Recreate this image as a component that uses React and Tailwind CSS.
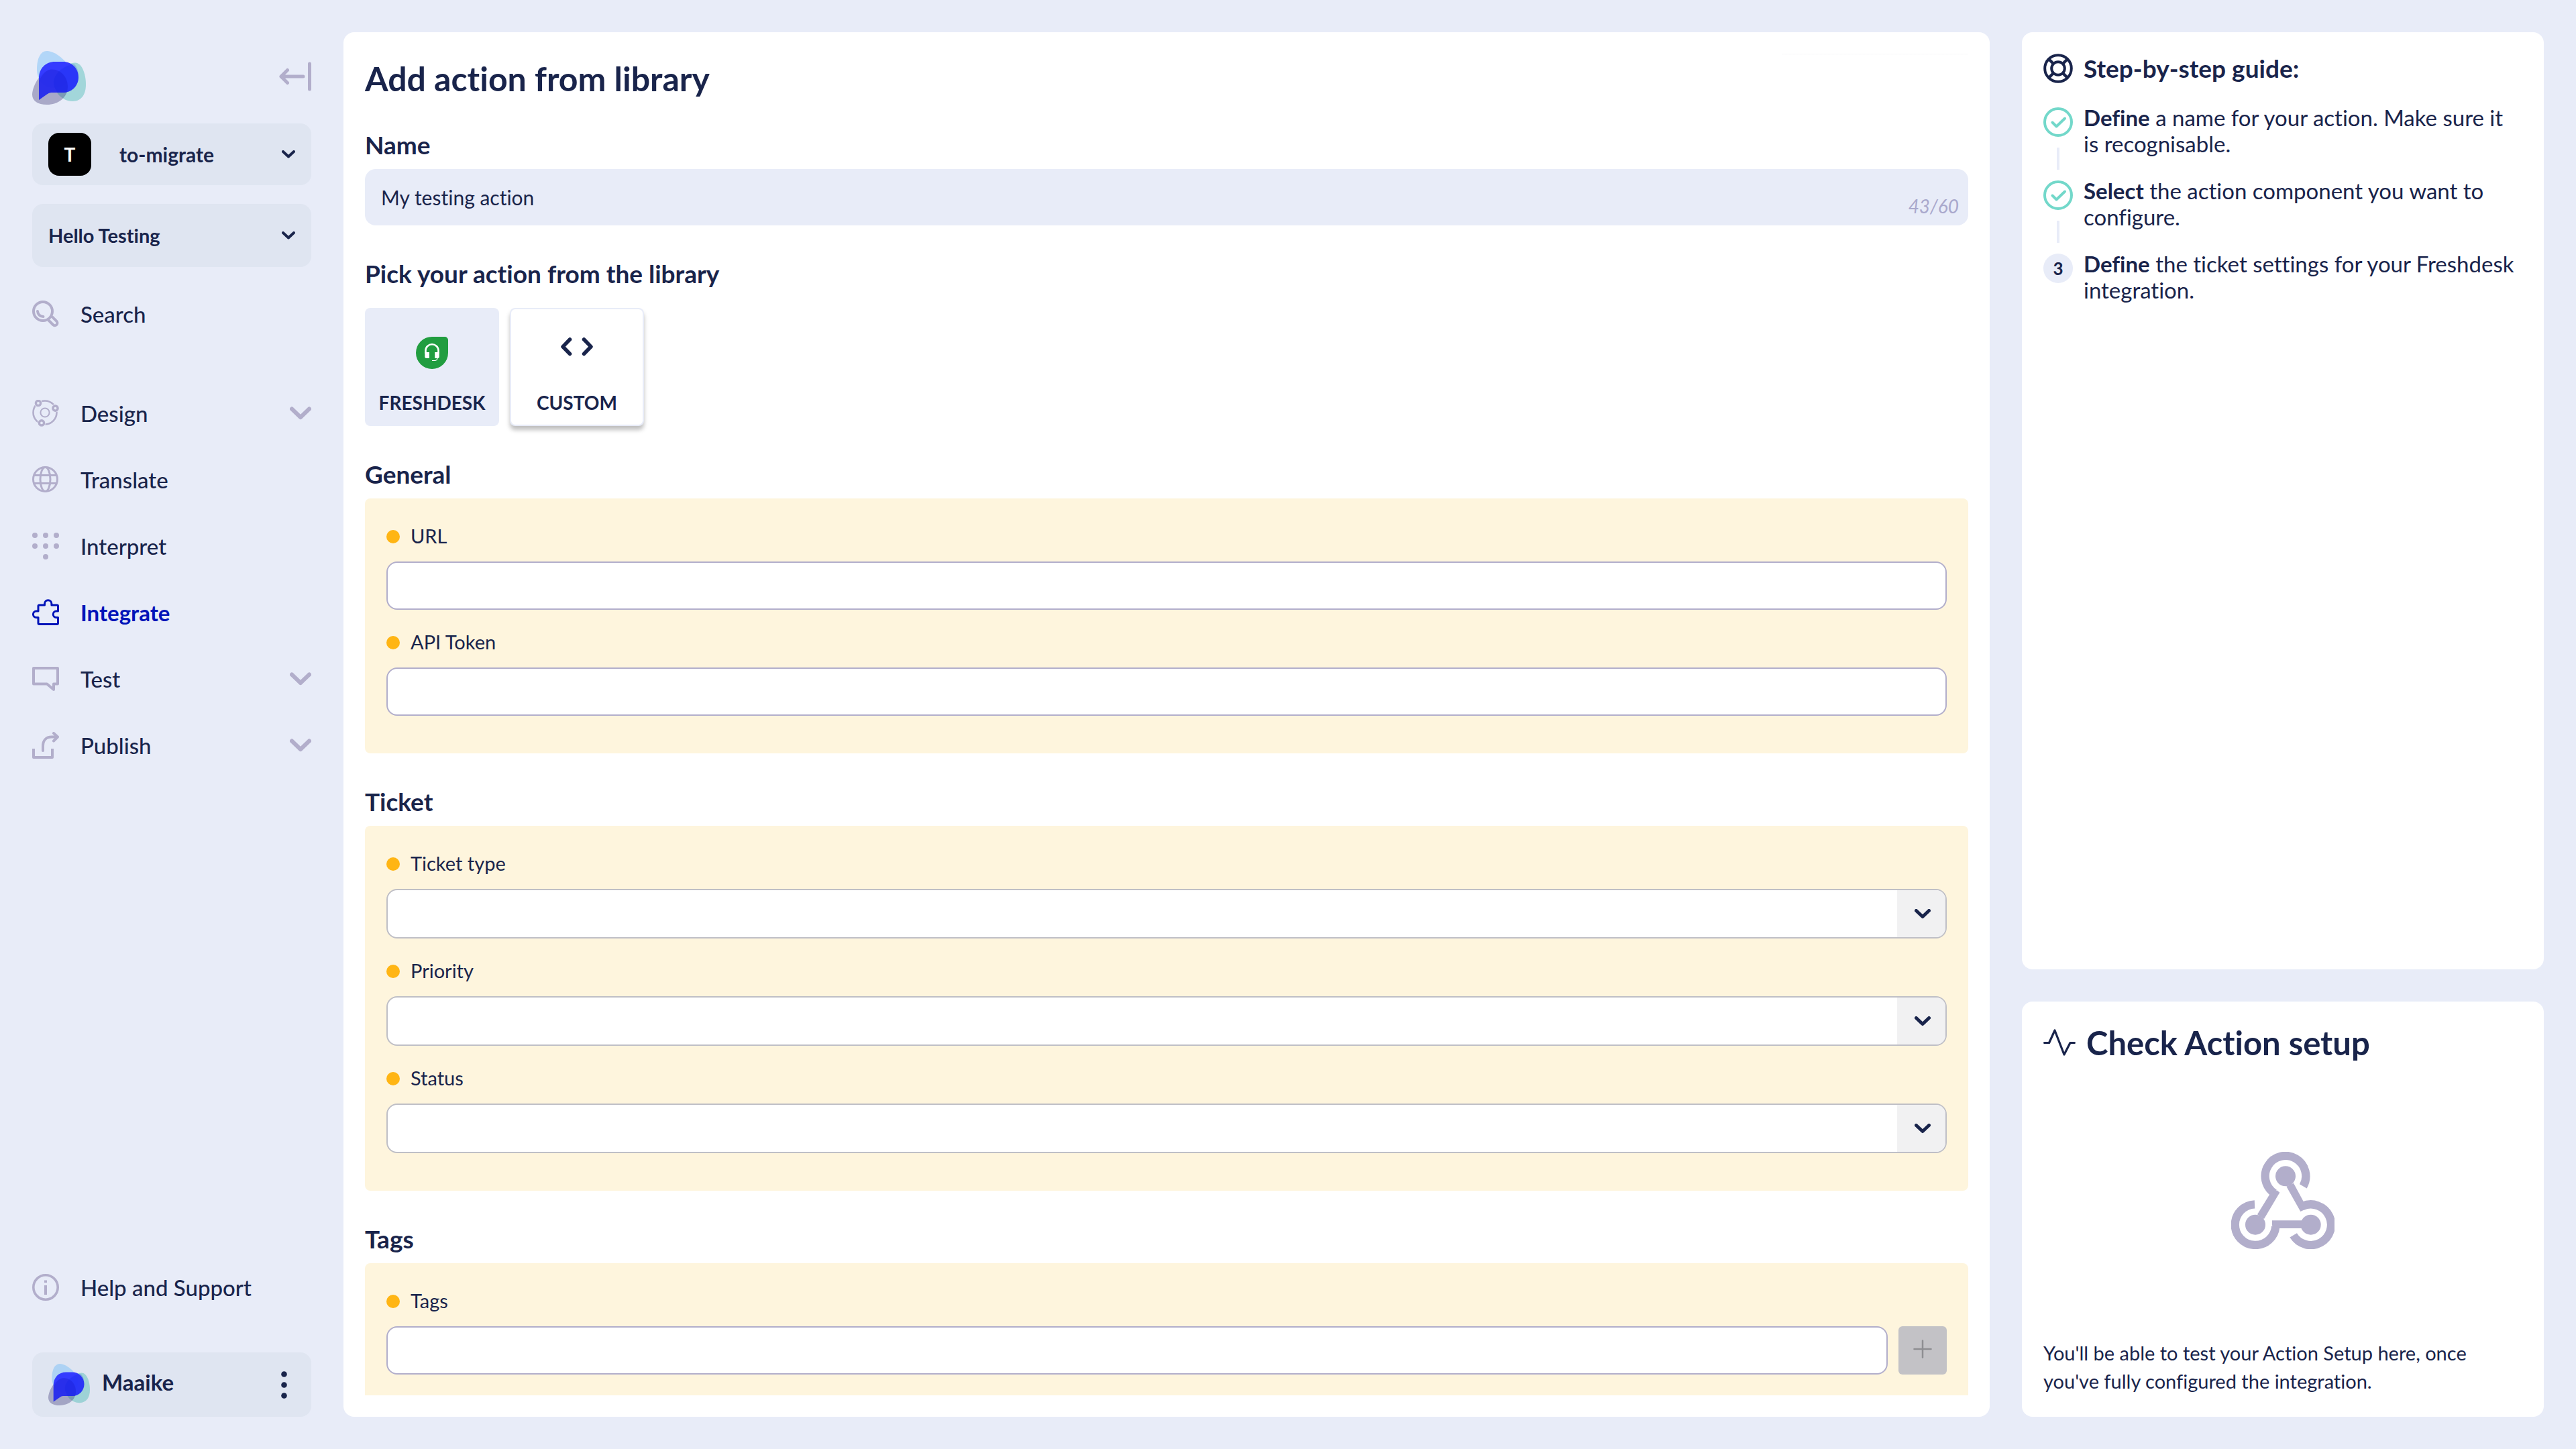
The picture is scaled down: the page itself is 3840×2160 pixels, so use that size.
import React from "react";

const LILAC = "#B2AECB";
const NAVY = "#19244B";

function Logo({ className }) {
  return (
    <svg viewBox="0 0 80 80" className={className} aria-hidden="true">
      <path d="M22 0C36 0 58 20 58 34C58 48 44 55 32 55C14 55 7 40 7 27C7 12 12 0 22 0Z" fill="#7CC0F8" fillOpacity="0.5" />
      <path d="M64 17.5C74 17.5 80 34 80 50C80 64 74 75 60 75C44 75 32 60 32 47C32 32 50 17.5 64 17.5Z" fill="#5CC0BC" fillOpacity="0.5" />
      <path d="M29 27.5C44 27.5 53 40 53 53C53 70 38 80 22 80C8 80 0 74 0 65C0 52 14 27.5 29 27.5Z" fill="#332D6F" fillOpacity="0.35" />
      <path d="M10 73V41C10 26 20 16 34 16H46C59 16 69 26 69 39C69 52 59 62 46 62H28Q25 62 22 64.500Z" fill="#2A2FFF" fillOpacity="0.93" />
      <path d="M29 27.500C44 27.500 53 40 53 53Q53 58 51.500 61.500Q49 62 46 62H28Q25 62 22 64.500L10 73V45C15 34 22 27.500 29 27.500Z" fill="#1A1EC8" fillOpacity="0.3" />
      <path d="M64 21C68 26 69 32 69 39C69 52 59 62 46 62H38C34 57 32 51 32 47C32 35 46 22 62 19.500Z" fill="#0A22E8" fillOpacity="0.2" />
    </svg>
  );
}

function CollapseIcon() {
  return (
    <svg viewBox="0 0 48 44" className="mb-1 h-11 w-12" fill="none" stroke={LILAC} strokeWidth="5" strokeLinecap="round" strokeLinejoin="round" aria-hidden="true">
      <path d="M45.500 3V41M36 22H3M12.500 12.500L3 22L12.500 31.500" />
    </svg>
  );
}

function SmallChevron() {
  return (
    <svg viewBox="0 0 20 12" className="h-3 w-5 shrink-0" fill="none" stroke={NAVY} strokeWidth="4" strokeLinecap="round" strokeLinejoin="round" aria-hidden="true">
      <path d="M2 2L10 9.500L18 2" />
    </svg>
  );
}

function NavChevron() {
  return (
    <svg viewBox="0 0 32 20" className="ml-auto h-5 w-8" fill="none" stroke={LILAC} strokeWidth="6" strokeLinecap="round" strokeLinejoin="round" aria-hidden="true">
      <path d="M3 3.500L16 16L29 3.500" />
    </svg>
  );
}

function NavSvg({ children, color = LILAC, width = 4 }) {
  return (
    <svg viewBox="0 0 40 40" className="size-10 shrink-0" fill="none" stroke={color} strokeWidth={width} strokeLinejoin="round" aria-hidden="true">
      {children}
    </svg>
  );
}

const icons = {
  search: (
    <NavSvg>
      <circle cx="16" cy="16" r="14" />
      <path d="M8 16A8.500 8.500 0 0 0 16.500 24" strokeLinecap="round" />
      <path d="M24 29l7 7a3.700 3.700 0 0 0 5.400-5.200l-7-7" />
    </NavSvg>
  ),
  design: (
    <NavSvg width={2.6}>
      <circle cx="19" cy="19" r="17.500" />
      <circle cx="19" cy="19" r="6.600" strokeWidth="2" />
      {[[9, 5], [34.5, 12.6], [14, 34.4]].map(([x, y]) => (
        <g key={x}>
          <circle cx={x} cy={y} r="6" fill="#E8ECF8" stroke="none" />
          <circle cx={x} cy={y} r="3.600" strokeWidth="3.400" />
        </g>
      ))}
    </NavSvg>
  ),
  translate: (
    <NavSvg width={3}>
      <circle cx="19.500" cy="19.500" r="18" />
      <ellipse cx="19.500" cy="19.500" rx="7.500" ry="18" />
      <path d="M2.500 13.500H36.500M2.500 25.500H36.500" />
    </NavSvg>
  ),
  interpret: (
    <NavSvg>
      {[[4, 4], [20, 4], [36, 4], [4, 20], [20, 20], [36, 20], [20, 36]].map(([x, y]) => (
        <circle key={`${x}-${y}`} cx={x} cy={y} r="4" fill={LILAC} stroke="none" />
      ))}
    </NavSvg>
  ),
  integrate: (
    <NavSvg color="#0013B8" width={3}>
      <path d="M9 18V10.500Q9 9 10.500 9H18.500V7a5.200 5.200 0 0 1 10.400 0V9H37Q38.500 9 38.500 10.500V18H36a4.750 4.750 0 0 0 0 9.500h2.500V36Q38.500 37.500 37 37.500H10.500Q9 37.500 9 36V27.500H6.200a4.750 4.750 0 0 1 0-9.500Z" />
    </NavSvg>
  ),
  test: (
    <NavSvg>
      <path d="M2 4H38V27.500H32V36L22 27.500H2Z" />
    </NavSvg>
  ),
  publish: (
    <NavSvg>
      <path d="M2 25V38H30V25" />
      <path d="M16 28V21C16 12.500 21 7.500 29 7.500H37M32 2L38 7.500L32 13.500" strokeLinecap="round" />
    </NavSvg>
  ),
  help: (
    <NavSvg width={3.6}>
      <circle cx="20" cy="20" r="18.200" />
      <path d="M18 9.500h4v3.500h-4zM18 17h4v14h-4z" fill={LILAC} stroke="none" />
    </NavSvg>
  ),
};

function NavItem({ icon, label, active, expandable }) {
  return (
    <a href="#" aria-current={active ? "page" : undefined} className={`flex h-[99px] items-center gap-8 text-[33px] leading-10 ${active ? "font-bold text-[#0013B8]" : "font-medium"}`}>
      {icons[icon]}
      <span>{label}</span>
      {expandable && <NavChevron />}
    </a>
  );
}

function Sidebar() {
  return (
    <aside className="flex w-[512px] shrink-0 flex-col px-12 pt-7">
      <div className="flex items-center justify-between">
        <Logo className="size-20" />
        <button type="button" aria-label="Collapse menu"><CollapseIcon /></button>
      </div>
      <button type="button" className="mt-7 flex h-[92px] items-center rounded-2xl bg-[#DFE5F1] px-6 text-[30px] font-bold">
        <span className="flex size-16 items-center justify-center rounded-2xl bg-black text-[28px] text-white">T</span>
        <span className="ml-[42px] mr-auto">to-migrate</span>
        <SmallChevron />
      </button>
      <button type="button" className="mt-7 flex h-[94px] items-center justify-between rounded-2xl bg-[#DFE5F1] px-6 text-[29px] font-bold">
        <span>Hello Testing</span>
        <SmallChevron />
      </button>
      <nav className="mt-5 flex flex-col">
        <NavItem icon="search" label="Search" />
        <div className="mt-[49px] flex flex-col">
          <NavItem icon="design" label="Design" expandable />
          <NavItem icon="translate" label="Translate" />
          <NavItem icon="interpret" label="Interpret" />
          <NavItem icon="integrate" label="Integrate" active />
          <NavItem icon="test" label="Test" expandable />
          <NavItem icon="publish" label="Publish" expandable />
        </div>
      </nav>
      <div className="mt-auto">
        <NavItem icon="help" label="Help and Support" />
      </div>
      <div className="mt-12 flex h-24 shrink-0 items-center rounded-2xl bg-[#DFE5F1] px-6">
        <Logo className="size-[62px]" />
        <span className="ml-[18px] pb-2 text-[33px] leading-10 font-bold">Maaike</span>
        <button type="button" aria-label="Account menu" className="ml-auto mr-3">
          <svg viewBox="0 0 9 41" className="h-[41px] w-[9px]" fill={NAVY} aria-hidden="true">
            <circle cx="4.500" cy="4.500" r="4.300" />
            <circle cx="4.500" cy="20.500" r="4.300" />
            <circle cx="4.500" cy="36.500" r="4.300" />
          </svg>
        </button>
      </div>
    </aside>
  );
}

function FreshdeskIcon() {
  return (
    <svg viewBox="0 0 48 48" className="size-12" fill="none" aria-hidden="true">
      <path d="M24 0H43A5 5 0 0 1 48 5V24A24 24 0 1 1 24 0Z" fill="#219D40" />
      <path d="M14.500 25V20.500A9.500 9.200 0 0 1 33.500 20.500V25" stroke="#fff" strokeWidth="2.600" />
      <path d="M13.300 23H20V32H15.300Q13.300 32 13.300 30ZM28.200 23H34.800V30Q34.800 32 32.800 32H28.200Z" fill="#fff" />
      <path d="M32 32Q31.500 35.500 28 35.500H24" stroke="#fff" strokeWidth="1.200" />
    </svg>
  );
}

function CodeIcon() {
  return (
    <svg viewBox="0 0 48 48" className="size-12" fill="none" stroke={NAVY} strokeWidth="5.500" strokeLinecap="round" strokeLinejoin="round" aria-hidden="true">
      <path d="M13.500 4L3 14.800L13.500 25.500M34.500 4L45 14.800L34.500 25.500" />
    </svg>
  );
}

function Heading({ children, htmlFor }) {
  const cls = "block pt-1 text-[37px] leading-[46px] font-bold";
  return htmlFor ? <label htmlFor={htmlFor} className={cls}>{children}</label> : <h2 className={cls}>{children}</h2>;
}

function FieldLabel({ id, children }) {
  return (
    <label htmlFor={id} className="flex h-[34px] items-center gap-4 text-[29px] leading-[32px]">
      <span className="size-5 rounded-full bg-[#FFB514]" />
      <span className="pb-0.5">{children}</span>
    </label>
  );
}

function TextField({ id, label, button }) {
  return (
    <div className="flex flex-col gap-5">
      <FieldLabel id={id}>{label}</FieldLabel>
      <div className="flex gap-4">
        <input id={id} type="text" className="h-[72px] min-w-0 flex-1 rounded-2xl border-2 border-[#B2AECB] bg-white px-6 text-[29px] outline-none" />
        {button}
      </div>
    </div>
  );
}

function SelectField({ id, label }) {
  return (
    <div className="flex flex-col gap-5">
      <FieldLabel id={id}>{label}</FieldLabel>
      <div className="relative flex h-[74px] overflow-hidden rounded-2xl border-2 border-[#BFBFC6] bg-white">
        <select id={id} defaultValue="" className="flex-1 appearance-none bg-transparent px-6 text-[29px] outline-none">
          <option value="" />
        </select>
        <span className="pointer-events-none absolute inset-y-0 right-0 flex w-[72px] items-center justify-center bg-[#F1F1F2] pl-1">
          <svg viewBox="0 0 24 15" className="h-[15px] w-6" fill="none" stroke={NAVY} strokeWidth="5" strokeLinecap="round" strokeLinejoin="round" aria-hidden="true">
            <path d="M2.500 2.500L12 11.500L21.500 2.500" />
          </svg>
        </span>
      </div>
    </div>
  );
}

function Section({ title, children }) {
  return (
    <section className="flex flex-col gap-[13px]">
      <Heading>{title}</Heading>
      <div className="flex flex-col gap-8 rounded-lg bg-[#FEF5DD] px-8 pt-10 pb-14">{children}</div>
    </section>
  );
}

function MainPanel() {
  return (
    <main className="min-w-0 flex-1 overflow-hidden rounded-2xl bg-white p-8">
      <form className="h-full overflow-hidden">
        <div className="flex items-start justify-between">
          <h1 className="pt-1 text-[50px] leading-[66px] font-bold">Add action from library</h1>
          <div className="h-0.5 w-[278px] rounded-full bg-linear-to-b from-[#F9F9FA] to-white" />
        </div>
        <div className="mt-[39px] flex flex-col gap-[45px]">
          <div className="flex flex-col gap-[13px]">
            <Heading htmlFor="action-name">Name</Heading>
            <div className="relative">
              <input id="action-name" type="text" defaultValue="My testing action" className="block h-[84px] w-full rounded-2xl bg-[#E8ECF8] px-6 text-[30px] outline-none" />
              <span className="absolute right-3.5 bottom-3 text-[28px] leading-[34px] text-[#A9A8CC] italic">43/60</span>
            </div>
          </div>
          <section className="flex flex-col gap-7">
            <Heading>Pick your action from the library</Heading>
            <div className="flex gap-4">
              <button type="button" aria-pressed="true" className="flex h-44 w-[200px] flex-col items-center gap-8 rounded-lg border-2 border-[#E8ECF8] bg-[#E8ECF8] pt-[41px] text-[28px] leading-9 font-bold">
                <FreshdeskIcon />
                FRESHDESK
              </button>
              <button type="button" aria-pressed="false" className="flex h-44 w-[200px] flex-col items-center gap-8 rounded-lg border-2 border-[#E8ECF8] bg-white pt-[41px] text-[28px] leading-9 font-bold shadow-[0_6px_6px_rgba(0,0,0,0.25)]">
                <CodeIcon />
                CUSTOM
              </button>
            </div>
          </section>
          <Section title="General">
            <TextField id="url" label="URL" />
            <TextField id="token" label="API Token" />
          </Section>
          <Section title="Ticket">
            <SelectField id="ticket-type" label="Ticket type" />
            <SelectField id="priority" label="Priority" />
            <SelectField id="status" label="Status" />
          </Section>
          <Section title="Tags">
            <TextField
              id="tags"
              label="Tags"
              button={
                <button type="button" disabled aria-label="Add tag" className="flex size-[72px] items-center justify-center rounded-md bg-[#C3C2C6]">
                  <svg viewBox="0 0 28 28" className="mb-1 size-7" stroke="#8E8E92" strokeWidth="2.500" strokeLinecap="round" aria-hidden="true">
                    <path d="M14 1.500V26.500M1.500 14H26.500" />
                  </svg>
                </button>
              }
            />
          </Section>
        </div>
      </form>
    </main>
  );
}

const steps = [
  { lead: "Define", text: "a name for your action. Make sure it is recognisable.", done: true },
  { lead: "Select", text: "the action component you want to configure.", done: true },
  { lead: "Define", text: "the ticket settings for your Freshdesk integration.", done: false },
];

function GuideCard() {
  return (
    <section className="flex-1 rounded-2xl bg-white p-8">
      <h2 className="flex items-center gap-4 text-[37px] leading-[44px] font-bold">
        <svg viewBox="0 0 44 44" className="size-11" fill="none" stroke={NAVY} strokeWidth="4" aria-hidden="true">
          <circle cx="22" cy="22" r="19.800" />
          <circle cx="22" cy="22" r="9.800" />
          <path d="M8 8L15 15M36 8L29 15M8 36L15 29M36 36L29 29" strokeWidth="4.500" />
        </svg>
        Step-by-step guide:
      </h2>
      <ol className="mt-8">
        {steps.map((s, i) => (
          <li key={i} className="flex gap-4">
            <div className="flex w-11 shrink-0 flex-col items-center pt-1">
              {s.done ? (
                <svg viewBox="0 0 44 44" className="size-11" fill="none" stroke="#73D8CA" strokeWidth="4" strokeLinecap="round" strokeLinejoin="round" aria-label="Done">
                  <circle cx="22" cy="22" r="20" />
                  <path d="M13.500 22.500L19.500 28.500L32 16.500" />
                </svg>
              ) : (
                <span className="flex size-11 items-center justify-center rounded-full bg-[#E8ECF8] text-[26px] leading-8 font-bold">{i + 1}</span>
              )}
              {s.done && <span className="mt-4 mb-3 h-[33px] w-1 bg-[#E8ECF8]" />}
            </div>
            <p className="text-[33px] leading-[39px]">
              <strong className="font-bold">{s.lead}</strong> {s.text}
            </p>
          </li>
        ))}
      </ol>
    </section>
  );
}

function WebhookIcon() {
  return (
    <svg viewBox="0 0 462 435" className="h-[145px] w-[154px]" aria-hidden="true">
      <g fill="none" stroke={LILAC} strokeWidth="37">
        <path d="M322 154A91 91 0 1 0 193 185" />
        <path d="M105 235A91 91 0 1 0 199 333" />
        <path d="M278 373A91 91 0 1 0 319 243" />
      </g>
      <g fill={LILAC}>
        <circle cx="243" cy="109" r="45" />
        <circle cx="108" cy="326" r="45" />
        <circle cx="356" cy="326" r="45" />
        <path d="M171 192L204 172L217 182L147 300L117 280Z" />
        <path d="M247 155L279 140L323 222L328 259L310 267Z" />
        <path d="M183 307H325V342H216L199 340L183 330Z" />
      </g>
    </svg>
  );
}

function SetupCard() {
  return (
    <section className="rounded-2xl bg-white p-8">
      <h2 className="flex items-center gap-4 text-[49px] leading-[58px] font-bold">
        <svg viewBox="0 0 48 40" className="h-10 w-12" fill="none" stroke={NAVY} strokeWidth="3.200" strokeLinecap="round" strokeLinejoin="round" aria-hidden="true">
          <path d="M1.600 20.500H8.600L17 2L31 38L40 20.500H46.400" />
        </svg>
        Check Action setup
      </h2>
      <div className="my-[134px] flex justify-center"><WebhookIcon /></div>
      <p className="text-[29px] leading-[42px]">
        You'll be able to test your Action Setup here, once you've fully configured the integration.
      </p>
    </section>
  );
}

export default function App() {
  return (
    <div className="flex h-screen bg-[#E8ECF8] py-12 pr-12 font-['Lato',sans-serif] text-[#19244B] [font-variant-ligatures:none]">
      <Sidebar />
      <MainPanel />
      <div className="ml-12 flex w-[778px] shrink-0 flex-col gap-12">
        <GuideCard />
        <SetupCard />
      </div>
    </div>
  );
}
